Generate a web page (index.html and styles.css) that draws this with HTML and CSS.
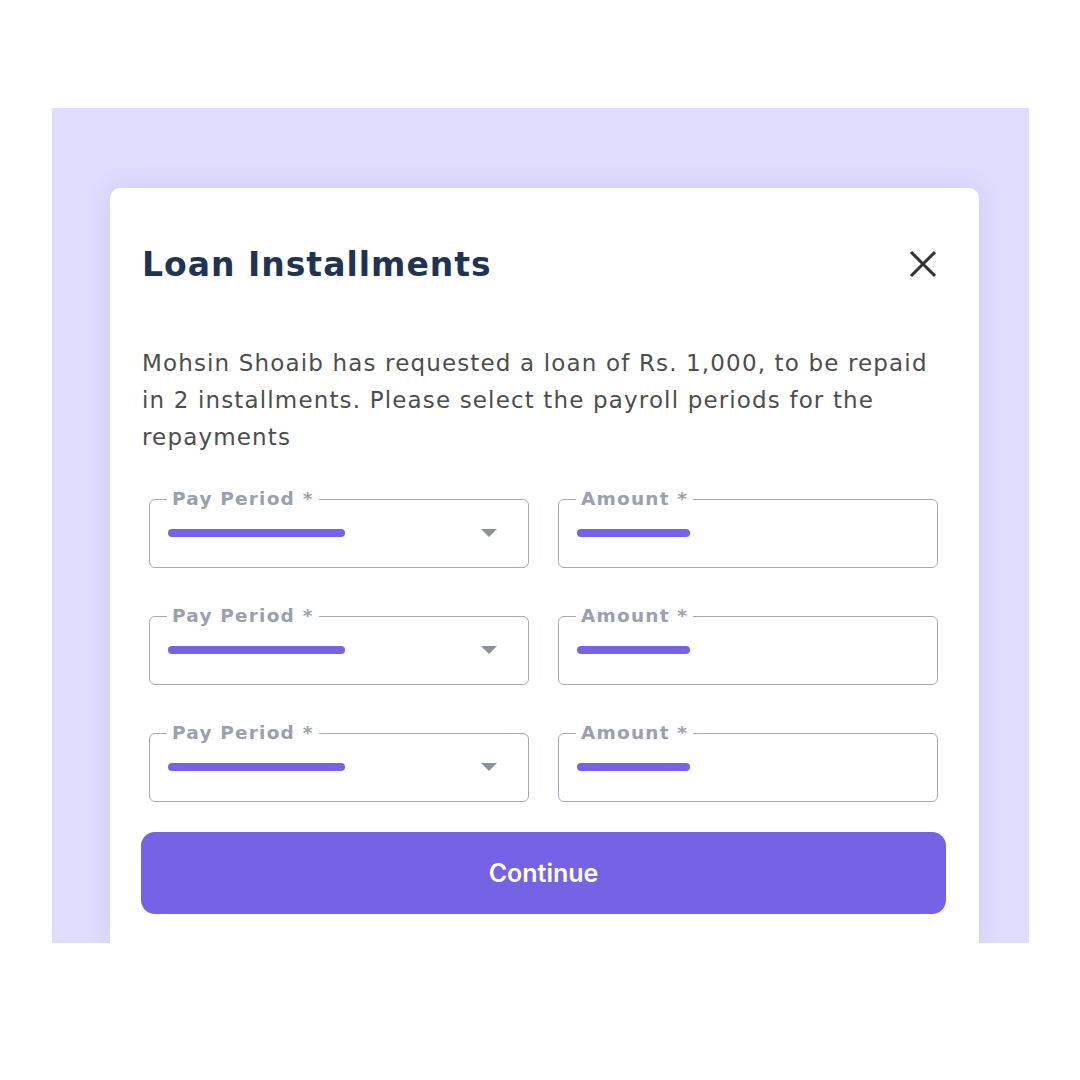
FILE: index.html
```html
<!DOCTYPE html>
<html lang="en">
<head>
    <meta charset="UTF-8">
    <meta name="viewport" content="width=device-width, initial-scale=1.0">
    <title>Loan Installments</title>
    <link rel="stylesheet" href="styles.css">
</head>
<body>
    <div class="backdrop">
        <div class="modal">
            <div class="modal-header">
                <h1>Loan Installments</h1>
                <button class="close" aria-label="Close">
                    <svg width="28" height="28" viewBox="0 0 28 28">
                        <path d="M2 2 L26 26 M26 2 L2 26" stroke="#333" stroke-width="3" stroke-linecap="butt"/>
                    </svg>
                </button>
            </div>
            <p class="intro">Mohsin Shoaib has requested a loan of Rs. 1,000, to be repaid in 2 installments. Please select the payroll periods for the repayments</p>

            <div class="fields">
                <fieldset class="field">
                    <legend>Pay Period *</legend>
                    <span class="bar bar-long"></span>
                    <span class="caret"></span>
                </fieldset>
                <fieldset class="field">
                    <legend>Amount *</legend>
                    <span class="bar bar-short"></span>
                </fieldset>

                <fieldset class="field">
                    <legend>Pay Period *</legend>
                    <span class="bar bar-long"></span>
                    <span class="caret"></span>
                </fieldset>
                <fieldset class="field">
                    <legend>Amount *</legend>
                    <span class="bar bar-short"></span>
                </fieldset>

                <fieldset class="field">
                    <legend>Pay Period *</legend>
                    <span class="bar bar-long"></span>
                    <span class="caret"></span>
                </fieldset>
                <fieldset class="field">
                    <legend>Amount *</legend>
                    <span class="bar bar-short"></span>
                </fieldset>
            </div>

            <button class="continue">Continue</button>
        </div>
    </div>
</body>
</html>
```

FILE: styles.css
```css
body {
    margin: 0;
    padding: 0;
    background: #fff;
    font-family: "DejaVu Sans", "Noto Sans", sans-serif;
}

.backdrop {
    margin: 108px 0 0 52px;
    width: 977px;
    height: 835px;
    background: #e0dcfd;
    overflow: hidden;
    box-sizing: border-box;
    padding: 80px 50px 0 58px;
}

.modal {
    width: 869px;
    height: 100%;
    background: #fff;
    border-radius: 10px 10px 0 0;
    box-shadow: 0 0 24px rgba(90, 70, 200, 0.12);
    box-sizing: border-box;
    padding: 52px 33px 0 32px;
}

.modal-header {
    display: flex;
    justify-content: space-between;
    align-items: center;
    height: 48px;
}

.modal-header h1 {
    margin: 0;
    font-size: 33px;
    font-weight: 700;
    color: #1f3354;
    letter-spacing: 1px;
}

.close {
    background: none;
    border: none;
    padding: 0;
    margin-right: 9px;
    width: 28px;
    height: 28px;
    cursor: pointer;
}

.intro {
    margin: 57px 0 0;
    font-size: 23px;
    line-height: 37px;
    color: #4d4d4d;
    letter-spacing: 1.15px;
}

.fields {
    display: grid;
    grid-template-columns: 380px 380px;
    column-gap: 29px;
    row-gap: 38px;
    margin: 33px 0 0 7px;
}

.field {
    position: relative;
    margin: 0;
    height: 79px;
    box-sizing: border-box;
    border: 1.5px solid #a2a9b7;
    border-radius: 6px;
    padding: 0 18px;
}

.field legend {
    margin-left: -1px;
    padding: 0 5px;
    font-size: 18.5px;
    font-weight: 700;
    color: #9aa0ad;
    letter-spacing: 1.2px;
    line-height: 20px;
}

.bar {
    display: block;
    height: 8px;
    border-radius: 4px;
    background: #7562e6;
    margin-top: 20px;
}

.bar-long {
    width: 177px;
}

.bar-short {
    width: 113px;
}

.caret {
    position: absolute;
    right: 31px;
    top: 20px;
    width: 0;
    height: 0;
    border-left: 8px solid transparent;
    border-right: 8px solid transparent;
    border-top: 8px solid #8a909e;
}

.continue {
    display: block;
    width: 805px;
    height: 82px;
    margin: 30px 0 0 -1px;
    border: none;
    border-radius: 14px;
    background: #7563e6;
    color: #fff;
    font-family: Inter, "Liberation Sans", sans-serif;
    font-size: 25px;
    font-weight: 600;
    cursor: pointer;
}
```
